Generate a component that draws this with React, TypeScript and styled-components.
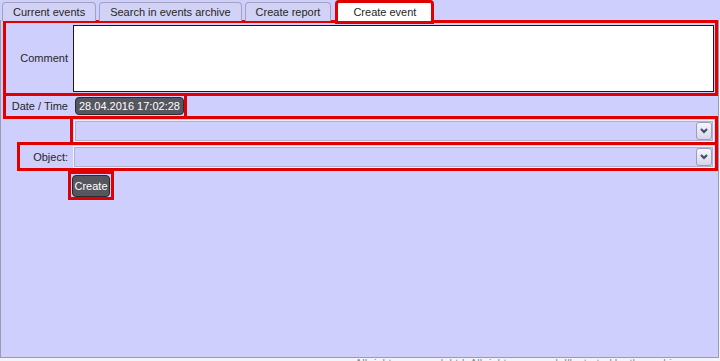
import styled, { createGlobalStyle } from 'styled-components';

const BG = '#cfcffd';
const RED = '#e00000';

const GlobalStyle = createGlobalStyle`
  html, body {
    margin: 0;
    padding: 0;
    background: #f4f4f6;
    font-family: 'Liberation Sans', Arial, sans-serif;
    font-size: 11px;
    color: #262626;
    overflow: hidden;
  }
`;

const Page = styled.div`
  width: 720px;
  height: 361px;
  overflow: hidden;
  background: #f4f4f6;
`;

const TabBar = styled.div`
  display: flex;
  align-items: flex-start;
  height: 20px;
  padding-left: 2px;
  gap: 3px;
  background: ${BG};
`;

const Tab = styled.div<{ $active?: boolean }>`
  position: relative;
  box-sizing: border-box;
  display: flex;
  align-items: center;
  justify-content: center;
  white-space: nowrap;
  border-radius: 4px 4px 0 0;
  ${(p) =>
    p.$active
      ? `
    height: 24px;
    margin-left: 1px;
    margin-bottom: -4px;
    padding: 0 15px 1px;
    border: 3px solid ${RED};
    background: #ffffff;
    z-index: 1;
  `
      : `
    height: 19px;
    margin-top: 2px;
    padding: 0 10px;
    border: 1px solid #a2a2c0;
    border-bottom: none;
    background: #d2d2f6;
  `}
`;

const Panel = styled.div`
  box-sizing: border-box;
  width: 719px;
  height: 338px;
  display: flex;
  flex-direction: column;
  padding-left: 2px;
  background: ${BG};
  border: 1px solid #9a9ab2;
  border-top: none;
`;

const Row = styled.div<{ $indent?: number; $height?: number; $shrink?: boolean; $overlap?: boolean }>`
  box-sizing: border-box;
  display: flex;
  align-items: center;
  height: ${(p) => p.$height ?? 29}px;
  margin-left: ${(p) => p.$indent ?? 0}px;
  margin-top: ${(p) => (p.$overlap ? -3 : 0)}px;
  border: 3px solid ${RED};
  align-self: ${(p) => (p.$shrink ? 'flex-start' : 'stretch')};
`;

const Label = styled.div<{ $width: number }>`
  flex: none;
  width: ${(p) => p.$width}px;
  box-sizing: border-box;
  padding-right: 4px;
  text-align: right;
  white-space: nowrap;
`;

const CommentBox = styled.textarea`
  flex: 1;
  box-sizing: border-box;
  height: 67px;
  margin: 2px 1px 1px 1px;
  align-self: flex-start;
  border: 1px solid #1a1a1a;
  background: #ffffff;
  resize: none;
  outline: none;
  font-family: inherit;
`;

const DateBadge = styled.div`
  box-sizing: border-box;
  height: 18px;
  margin-left: 3px;
  padding: 0 3px;
  display: flex;
  align-items: center;
  border: 1px solid #2c2c34;
  border-radius: 4px;
  background: #56565f;
  color: #ffffff;
  font-size: 11px;
  white-space: nowrap;
`;

const SelectBox = styled.div`
  flex: 1;
  box-sizing: border-box;
  height: 22px;
  margin: 1px 1px 0 1px;
  align-self: flex-start;
  display: flex;
  align-items: center;
  justify-content: flex-end;
  padding-right: 1px;
  border: 1px solid #f2f2ff;
  box-shadow: inset 0 0 0 1px #b2b2ce;
  background: ${BG};
`;

const ArrowButton = styled.div`
  box-sizing: border-box;
  width: 16px;
  height: 18px;
  display: flex;
  align-items: center;
  justify-content: center;
  border: 1px solid #9c9cb8;
  border-radius: 3px;
  background: linear-gradient(#f6f6fe, #d6d6ea);
`;

const CreateButton = styled.button`
  box-sizing: border-box;
  width: 38px;
  height: 22px;
  margin: 1px 1px 0 1px;
  align-self: flex-start;
  padding: 0;
  border: 1px solid #2a2a30;
  border-radius: 4px;
  background: #56565f;
  color: #ffffff;
  font-family: inherit;
  font-size: 11px;
`;

const Footer = styled.div`
  margin-left: 355px;
  line-height: 13px;
  margin-top: -1px;
  color: #8a8a8a;
  font-size: 11px;
  white-space: nowrap;
`;

const Chevron = () => (
  <svg width="10" height="8" viewBox="0 0 10 8">
    <polyline points="2,2 5,5 8,2" fill="none" stroke="#3c4866" strokeWidth="2" />
  </svg>
);

const Select = () => (
  <SelectBox>
    <ArrowButton>
      <Chevron />
    </ArrowButton>
  </SelectBox>
);

export default function App() {
  return (
    <Page>
      <GlobalStyle />
      <TabBar>
        <Tab>Current events</Tab>
        <Tab>Search in events archive</Tab>
        <Tab>Create report</Tab>
        <Tab $active>Create event</Tab>
      </TabBar>
      <Panel>
        <Row $height={76}>
          <Label $width={66}>Comment</Label>
          <CommentBox />
        </Row>
        <Row $height={26} $shrink $overlap>
          <Label $width={66}>Date / Time</Label>
          <DateBadge>28.04.2016 17:02:28</DateBadge>
        </Row>
        <Row $indent={67} $overlap>
          <Select />
        </Row>
        <Row $indent={14} $overlap>
          <Label $width={52}>Object:</Label>
          <Select />
        </Row>
        <Row $indent={65} $shrink>
          <CreateButton>Create</CreateButton>
        </Row>
      </Panel>
      <Footer>All rights reserved. Ltd. All rights reserved. Illustrated by the archive.</Footer>
    </Page>
  );
}
